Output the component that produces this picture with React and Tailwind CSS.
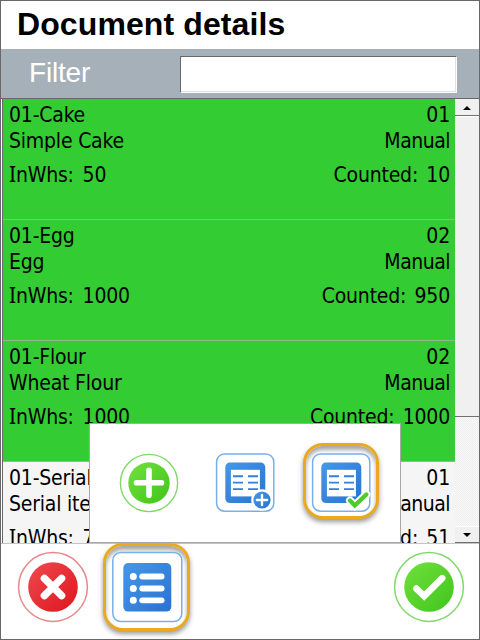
const rows = [
  { code: '01-Cake', name: 'Simple Cake', whs: '50', no: '01', counted: '10' },
  { code: '01-Egg', name: 'Egg', whs: '1000', no: '02', counted: '950' },
  { code: '01-Flour', name: 'Wheat Flour', whs: '1000', no: '02', counted: '1000' },
  { code: '01-Serial', name: 'Serial item', whs: '70', no: '01', counted: '51', plain: true },
];

function Row({ row }) {
  return (
    <div
      className={`flex h-[121px] shrink-0 justify-between border-b border-[#8fb98f] pt-[3px] pr-[5px] pl-[6px] leading-[26px] ${
        row.plain ? 'bg-[#f5f5f5]' : 'bg-[#33cc33]'
      }`}
    >
      <div>
        <div className="h-[26px]">{row.code}</div>
        <div className="h-[26px]">{row.name}</div>
        <div className="mt-2 h-[26px] [word-spacing:3px]">
          <span className="font-['Noto_Sans',sans-serif] leading-none">I</span>nWhs: {row.whs}
        </div>
      </div>
      <div className="text-right">
        <div className="h-[26px]">{row.no}</div>
        <div className="h-[26px] tracking-[-0.5px]">Manual</div>
        <div className="mt-2 h-[26px] [word-spacing:2.5px]">Counted: {row.counted}</div>
      </div>
    </div>
  );
}

function Gradients() {
  return (
    <svg className="absolute h-0 w-0">
      <defs>
        <linearGradient id="green" x1="0" y1="0" x2="1" y2="1">
          <stop offset="0" stopColor="#72e03c" />
          <stop offset="1" stopColor="#3fc51c" />
        </linearGradient>
        <linearGradient id="red" x1="0" y1="0" x2="1" y2="1">
          <stop offset="0" stopColor="#ee4a50" />
          <stop offset="1" stopColor="#df141c" />
        </linearGradient>
        <linearGradient id="blue" x1="0" y1="0" x2="1" y2="1">
          <stop offset="0" stopColor="#4598e6" />
          <stop offset="1" stopColor="#2a72d2" />
        </linearGradient>
      </defs>
    </svg>
  );
}

function CancelIcon() {
  return (
    <svg width="72" height="72" viewBox="0 0 72 72" fill="none">
      <circle cx="36" cy="36" r="34.4" fill="#fff" stroke="#e8888c" strokeWidth="1.5" />
      <circle cx="36" cy="36" r="24.8" fill="url(#red)" />
      <path d="M27.4 27.4L44.6 44.6M44.6 27.4L27.4 44.6" stroke="#fff" strokeWidth="7.4" strokeLinecap="round" />
    </svg>
  );
}

function ConfirmIcon() {
  return (
    <svg width="72" height="72" viewBox="0 0 72 72" fill="none">
      <circle cx="36" cy="36" r="34.4" fill="#fff" stroke="#80d968" strokeWidth="1.5" />
      <circle cx="36" cy="36" r="24.8" fill="url(#green)" />
      <path d="M23.4 37.6L31.2 45.2L49.2 27.2" stroke="#fff" strokeWidth="6.6" strokeLinecap="round" />
    </svg>
  );
}

function ListIcon() {
  return (
    <svg width="72" height="72" viewBox="0 0 72 72" fill="none">
      <rect x="1.8" y="1.4" width="69" height="69.2" rx="8" fill="#fff" stroke="#78b0ea" strokeWidth="1.5" />
      <rect x="12.3" y="12" width="48" height="48.6" rx="5" fill="url(#blue)" />
      {[25.5, 37.5, 49.3].map((y) => (
        <g key={y}>
          <circle cx="22.3" cy={y} r="3.5" fill="#fff" />
          <path d={`M31.2 ${y}H50.6`} stroke="#fff" strokeWidth="5.8" strokeLinecap="round" />
        </g>
      ))}
    </svg>
  );
}

function AddIcon() {
  return (
    <svg width="60" height="60" viewBox="0 0 60 60" fill="none">
      <circle cx="30" cy="30" r="28.6" fill="#fff" stroke="#80d968" strokeWidth="1.4" />
      <circle cx="30" cy="30" r="20.7" fill="url(#green)" />
      <path d="M30 17.3V42.3M17.5 29.8H42.5" stroke="#fff" strokeWidth="5.6" strokeLinecap="round" />
    </svg>
  );
}

function TableIcon({ children }) {
  return (
    <svg width="60" height="60" viewBox="0 0 60 60" fill="none">
      <rect x="1.6" y="1" width="57.2" height="57.2" rx="8" fill="#fff" stroke="#78b0ea" strokeWidth="1.5" />
      <rect x="10.3" y="9.6" width="40" height="40.4" rx="4.5" fill="url(#blue)" />
      <rect x="15.9" y="16.8" width="29" height="26.6" fill="#fff" />
      <path
        d="M18 23.2H28M33 23.2H43M18 29.6H28M33 29.6H43M18 36.1H28M33 36.1H43"
        stroke="#347fd9"
        strokeWidth="1.9"
      />
      {children}
    </svg>
  );
}

function Dither() {
  return (
    <svg className="h-full w-full" shapeRendering="crispEdges">
      <defs>
        <pattern id="dither" width="2" height="2" patternUnits="userSpaceOnUse">
          <rect width="2" height="2" fill="#fbfbfb" />
          <path d="M0 0h1v1h-1zM1 1h1v1h-1z" fill="#ececec" />
        </pattern>
      </defs>
      <rect width="100%" height="100%" fill="url(#dither)" />
    </svg>
  );
}

function Scrollbar() {
  return (
    <div className="flex w-6 flex-col bg-[#f0f0f0]">
      <div className="flex h-[17px] items-center justify-center border-b border-[#707070] bg-[#f0f0f0] pt-px">
        <svg width="8" height="4" viewBox="0 0 8 4"><path d="M4 0L8 4H0z" /></svg>
      </div>
      <div className="h-[301px] border-t border-b border-t-white border-b-[#707070] bg-[#f0f0f0]" />
      <div className="min-h-0 flex-1"><Dither /></div>
      <div className="flex h-[17px] items-center justify-center border-t border-b border-t-white border-b-[#707070] bg-[#f0f0f0]">
        <svg width="8" height="4" viewBox="0 0 8 4"><path d="M0 0H8L4 4z" /></svg>
      </div>
    </div>
  );
}

export default function App() {
  return (
    <div className="relative flex h-[640px] w-[480px] flex-col overflow-hidden border border-[#686868] bg-white font-['Liberation_Sans',sans-serif] text-black">
      <Gradients />
      <header className="h-12 shrink-0 pl-4 text-[32px] leading-[46px] font-bold whitespace-nowrap tracking-[0.1px]">
        Document details
      </header>
      <div className="flex h-[49px] shrink-0 items-start bg-[#a6b0b9] pt-[7px] pr-[22px]">
        <label className="w-[179px] pl-7 text-[28px] leading-[34px] tracking-[-0.2px] text-white">Filter</label>
        <div className="h-[37px] flex-1 border border-t-[#686868] border-r-white border-b-white border-l-[#686868] bg-white">
          <div className="h-full border-r border-b border-[#e0e0e0]" />
        </div>
      </div>
      <main className="flex h-[446px] shrink-0 border-t border-b border-t-[#686868] border-b-[#c4c4c4] pl-px">
        <div className="flex flex-1 flex-col overflow-hidden border-l border-[#686868] font-['DejaVu_Sans_Condensed','DejaVu_Sans',sans-serif] text-[21px] tracking-[-0.2px] whitespace-nowrap [font-stretch:condensed]">
          {rows.map((row) => (
            <Row key={row.code} row={row} />
          ))}
        </div>
        <Scrollbar />
      </main>
      <footer className="flex flex-1 items-start justify-between pt-[7px] pr-[14px] pl-[16px]">
        <div className="flex gap-[22px]">
          <CancelIcon />
          <div className="relative">
            <div className="absolute -top-[8px] -left-[8px] h-[88px] w-[87px] rounded-[20px] border-[3px] border-[#eaaa20] bg-white shadow-[0_3px_5px_rgba(0,0,0,0.4),inset_0_4px_4px_rgba(0,0,0,0.35)]" />
            <div className="relative"><ListIcon /></div>
          </div>
        </div>
        <ConfirmIcon />
      </footer>
      <div className="absolute top-[422px] left-[88px] flex h-[120px] w-[312px] items-start gap-9 border border-[#a8a8a8] bg-white pt-[29px] pl-[29px]">
        <AddIcon />
        <TableIcon>
          <circle cx="47" cy="47" r="10.8" fill="#fff" />
          <circle cx="47" cy="47" r="8.6" fill="url(#blue)" />
          <path d="M47 41.8V52.2M41.8 47H52.2" stroke="#fff" strokeWidth="2.3" strokeLinecap="round" />
        </TableIcon>
        <div className="relative">
          <div className="absolute -top-[10px] -left-[8px] h-[76px] w-[76px] rounded-[20px] border-[3px] border-[#eaaa20] bg-white shadow-[0_3px_5px_rgba(0,0,0,0.4),inset_0_4px_4px_rgba(0,0,0,0.35)]" />
          <div className="relative">
            <TableIcon>
              <path d="M39 47.5L43.8 52.5L55.3 41.5" stroke="#fff" strokeWidth="8" strokeLinecap="round" />
              <path d="M39 47.5L43.8 52.5L55.3 41.5" stroke="#4fcb2b" strokeWidth="4.4" strokeLinecap="round" />
            </TableIcon>
          </div>
        </div>
      </div>
    </div>
  );
}
